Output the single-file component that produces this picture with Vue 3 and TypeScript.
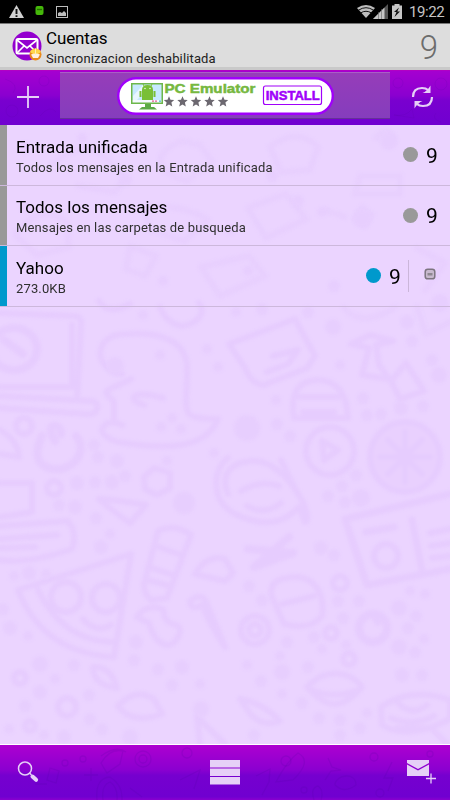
<script setup lang="ts">
interface Account {
  name: string
  detail: string
  unread: number
  tone: 'grey' | 'blue'
  folder: boolean
}

const accounts: Account[] = [
  { name: 'Entrada unificada', detail: 'Todos los mensajes en la Entrada unificada', unread: 9, tone: 'grey', folder: false },
  { name: 'Todos los mensajes', detail: 'Mensajes en las carpetas de busqueda', unread: 9, tone: 'grey', folder: false },
  { name: 'Yahoo', detail: '273.0KB', unread: 9, tone: 'blue', folder: true },
]

// x, y, radius of the small dots in the wallpaper
const dots: number[][] = [
  [143, 315, 5], [160, 355, 5], [207, 349, 5], [218, 367, 5], [94, 445, 6], [98, 457, 6], [117, 461, 7], [167, 461, 5],
  [214, 453, 5], [77, 483, 7], [95, 482, 6], [112, 482, 7], [125, 476, 6], [59, 505, 6], [75, 507, 7], [96, 518, 6],
  [161, 427, 5], [172, 418, 5], [181, 429, 5], [115, 366, 9], [184, 503, 11], [333, 327, 8], [340, 365, 5], [407, 322, 7],
  [412, 341, 6], [432, 360, 6], [439, 375, 8], [276, 400, 5], [363, 398, 6], [367, 415, 6], [381, 414, 6], [401, 408, 7],
  [423, 406, 6], [247, 428, 13], [277, 424, 6], [290, 436, 6], [356, 475, 6], [342, 486, 6], [328, 496, 6], [345, 502, 6],
  [361, 498, 9], [14, 576, 5], [29, 573, 7], [46, 574, 5], [101, 547, 7], [110, 534, 5], [3, 609, 6], [10, 628, 7],
  [28, 636, 5], [40, 664, 8], [74, 665, 6], [55, 679, 5], [40, 692, 7], [25, 706, 6], [89, 695, 6], [90, 719, 6],
  [102, 729, 6], [9, 729, 5], [44, 735, 5], [64, 737, 7], [130, 737, 8], [136, 642, 7], [134, 660, 6], [158, 669, 6],
  [182, 667, 7], [172, 685, 6], [200, 684, 5], [201, 709, 8], [321, 548, 7], [334, 555, 6], [249, 586, 6], [262, 600, 6],
  [338, 601, 6], [359, 601, 6], [343, 618, 6], [410, 591, 5], [425, 594, 5], [399, 608, 8], [416, 616, 6], [408, 628, 6],
  [399, 647, 8], [415, 652, 6], [424, 639, 5], [314, 637, 6], [322, 649, 5], [287, 642, 6], [280, 656, 5], [282, 672, 8],
  [308, 667, 6], [261, 681, 6], [247, 665, 5], [402, 675, 7], [422, 675, 6], [282, 694, 5], [302, 703, 6], [319, 718, 6],
  [340, 720, 6], [340, 735, 6], [360, 728, 6], [254, 735, 6], [367, 713, 5], [346, 645, 5], [25, 148, 6], [82, 138, 5],
  [272, 176, 6], [389, 141, 9], [322, 212, 5], [362, 219, 9], [298, 201, 6], [163, 281, 5], [248, 271, 5], [334, 286, 6],
  [26, 208, 5], [126, 180, 6], [230, 230, 5], [236, 312, 5], [262, 309, 6], [308, 312, 6], [440, 303, 9],
]
</script>

<template>
  <div class="screen">
    <div class="status">
      <svg class="status-left" width="80" height="23" viewBox="0 0 80 23">
        <path d="M16.500 5 24 18H9Z" fill="#d0d0d0" />
        <path d="M16.500 9v5M16.500 15.200v1.700" stroke="#111" stroke-width="1.900" />
        <rect x="35.500" y="6" width="8" height="9" rx="2" fill="#45b80a" />
        <path d="M37 9.500h5" stroke="#277000" stroke-width="1.400" />
        <rect x="56.500" y="6.500" width="11" height="11" fill="none" stroke="#bdbdbd" />
        <path d="M58 16v-3l2-1 2 1 2-2 2 2v3z" fill="#bdbdbd" />
      </svg>
      <svg class="status-right" width="50" height="23" viewBox="0 0 50 23">
        <path d="M0 8Q9 2 18 8L9 18Z" fill="#bdbdbd" />
        <path d="M1.500 10.200Q9 5.200 16.500 10.200M3.500 13Q9 9.500 14.500 13" fill="none" stroke="#111" stroke-width="1" />
        <path d="M31 4v15H16Z" fill="#555" />
        <path d="M27.500 7.500V19H16Z" fill="#c5c5c5" />
        <path d="M21.500 12v7M24.500 9v10" stroke="#666" stroke-width=".6" />
        <path d="M35 5.500h2.500V4h5v1.500H45V19H35Z" fill="#c5c5c5" />
        <path d="m42 7.500-5 4.500h2.500L37.500 17l5.500-5.500h-2.700Z" fill="#111" />
      </svg>
      <span class="clock">19:22</span>
    </div>

    <header class="header">
      <svg class="logo" width="32" height="32" viewBox="0 0 32 32">
        <circle cx="15" cy="15" r="14.500" fill="#9300cf" />
        <rect x="4.500" y="8" width="21" height="14.500" rx="1.500" fill="none" stroke="#fff" stroke-width="2" />
        <path d="m5 9 10 8 10-8M5 22l7-7M25 22l-7-7" fill="none" stroke="#fff" stroke-width="1.700" />
        <circle cx="23.500" cy="23.500" r="6" fill="#e98a1c" />
        <path d="M18 21a6 6 0 0 1 11 0l-3 2h-5Z" fill="#ffd54b" />
        <path d="M19 23.500q4.500-2 9 0l-2 3.500h-5Z" fill="#fff0e2" />
        <path d="M23.500 17.500v6" stroke="#fff0b0" />
      </svg>
      <div class="heading">
        <div class="heading-title">Cuentas</div>
        <div class="heading-sub">Sincronizacion deshabilitada</div>
      </div>
      <span class="total">9</span>
    </header>

    <div class="toolbar">
      <svg class="add" width="60" height="54" viewBox="0 0 60 54">
        <g fill="none" stroke="#5b00a8" stroke-opacity=".16">
          <circle cx="12" cy="40" r="6" /><circle cx="44" cy="10" r="5" /><path d="M5 8q15 5 8 14M40 45q10-12 16-4" />
        </g>
        <path d="M28 15v22M17 26h22" stroke="#e6d0f7" stroke-width="1.800" />
      </svg>
      <div class="banner">
        <svg width="217" height="38" viewBox="0 0 217 38">
          <rect x="1.200" y="1.200" width="214.600" height="35.600" rx="17.800" fill="#fff" stroke="#a000fa" stroke-width="2.400" />
          <path d="M14 6h32v21H14z" fill="#6db74b" />
          <path d="M15.500 7.500h29v15.500h-29z" fill="#c7e9ff" />
          <path d="m16 19 10-11h7L20 23h-4z" fill="#e8f7ff" />
          <path d="M15.500 23h29v2.500h-29z" fill="#f5f9ff" />
          <path d="M35 24.200h2m1 0h2" stroke="#e65b8e" stroke-width="1.200" /><path d="M42 24.200h2" stroke="#45bdd0" stroke-width="1.200" />
          <path d="M25 13q0-5 5.500-5T36 13v10H25zM22.500 14h2v6h-2zM36.500 14h2v6h-2z" fill="#79bf35" />
          <path d="m27 9-1-2m8 2 1-2M25 13.500h11" stroke="#79bf35" />
          <circle cx="28" cy="11.500" r=".7" fill="#fff" /><circle cx="33" cy="11.500" r=".7" fill="#fff" />
          <path d="M28 27h6v3h3l3 2.500H22l3-2.500h3z" fill="#5caa45" />
          <text class="ad-name" x="47.500" y="16" textLength="91" lengthAdjust="spacingAndGlyphs">PC Emulator</text>
          <path v-for="i in 5" :key="i" :transform="`translate(${38.5 + i * 13.5} 24.500)`" d="m0-5.200 1.500 3.500 3.700.3-2.800 2.500.9 3.800L0 2.900l-3.300 2 .9-3.800-2.800-2.500 3.700-.3Z" fill="#6c6870" />
          <path d="M107.300 18h5v5l-5-1.500z" fill="#fff" opacity=".35" />
          <rect x="146.500" y="9" width="58" height="18.500" rx="2" fill="#fff" stroke="#a000fa" stroke-width="1.200" />
          <text class="ad-install" x="148.700" y="22.800" textLength="54" lengthAdjust="spacingAndGlyphs">INSTALL</text>
        </svg>
      </div>
      <svg class="sync" width="60" height="54" viewBox="0 0 60 54">
        <g fill="none" stroke="#5b00a8" stroke-opacity=".16">
          <path d="M4 44q12 2 18-6l2 9zM46 42q-5 6 5 9" /><circle cx="8" cy="12" r="5" /><circle cx="51" cy="13" r="6" />
        </g>
        <path d="M23 26q0-9 9-9 4 0 6 2M42 26q0 9-9 9-4 0-6-2" fill="none" stroke="#e6d0f7" stroke-width="2.200" />
        <path d="M40.500 14.500v7.500h-8q4.500-1.500 8-7.500ZM24.500 37.500v-7.500h8q-4.500 1.500-8 7.500Z" fill="#e6d0f7" />
      </svg>
    </div>

    <main class="content">
      <svg class="wallpaper" width="450" height="619" viewBox="0 125 450 619">
        <g fill="none" stroke="#e6ccfe" stroke-width="6" stroke-linecap="round" stroke-linejoin="round">
          <path d="M0 313l75 3q7 1 6 9l-4 75M0 396l92 5q7 2 5 8-2 6-10 5L0 408M72 325v62L0 387" />
          <ellipse cx="14" cy="349" rx="23" ry="21" stroke-width="8" /><path d="m4 340 19 14" stroke-width="8" />
          <path d="M122 374c-29-4-30-40 4-40 43-3 61 12 61 34 0 48-9 50 31 51-12 30-51 31-100 23-30-9-11-26 4-17M131 379c-31 15-28 10-17 23v20M163 398c-31-9-38 1-19 7" />
          <path d="M42 436c-15 32 12 36 23 32 19-8 18-25 11-32M55 441c-13-19 7-19 6-7" stroke-width="8" />
          <circle cx="24" cy="426" r="8" /><circle cx="54" cy="488" r="7" />
          <path d="M0 430q18 10 19 27L0 454M0 483h32v29q-16 3-32 5" />
          <path d="m144 477 10-9 16 5v15l-13 7-12-6ZM99 499q19 1 47 6l-16 18q-25-18-31-24" />
          <path d="M160 307c4 12 15 19 23 19 16-3 23-14 16-23M99 301q9 15 31 3" />
          <path d="m229 344 66-25 20 37-8 12-43 17q-13-1-19-17ZM273 356l25-6-10 14-21 8" />
          <path d="M294 418q-6-38 25-38 27 1 29 38zM300 397h38M303 412h31" />
          <circle cx="330" cy="451" r="24" /><path d="M322 441l16 9-14 10z" />
          <circle cx="405" cy="457" r="35" fill="#e9d0fe" /><path d="M405 432v50M380 457h50M388 440l34 34M422 440l-34 34" />
          <path d="m351 344 19-9 23 6-17 4 3 20 12 16 15-18 18 28-24 8-10-20-28-4 7-27Z" />
          <path d="M228 494c-12-29 18-36 34-32 31 9 53 59 43 60l-6-15q-25 27-66 6c-23-14-20-45-5-55" />
          <path d="M241 491q20-12 38-5M247 506q18 10 34-3M281 460l15 31" />
          <path d="m345 519 105-25M345 519l22 66 83-16M412 520l10 50M366 532l28-5" stroke-width="7" />
          <circle cx="386" cy="556" r="12" /><path d="M430 533l20-4M431 546l19-3M432 558l18-2" />
          <path d="m0 526 68-5q10 13 4 28Q28 564 0 560M0 539l57-4M0 548l35-1" />
          <path d="m18 590 113-36-17 103q-71-4-96-67Zm20 0q26 52 76 52" /><circle cx="66" cy="597" r="15" /><circle cx="106" cy="598" r="14" />
          <path d="M83 619q13 15 28 6" />
          <path d="m158 531q17-8 33 4l-24 63-16 2q-7-5-7-16Zm-2 15 25 9M149 567l24 8M147 580l20 5" />
          <path d="M137 617q9-14 26-8c3 23 17 9 17 23-7 22-25 14-31-9Z" />
          <path d="M195 574q12-20 30-15l8 14-8 8ZM190 601q12-10 17 3l18 43q-16-24-23-42-12 6-12-4Z" />
          <path d="M93 667q18-1 24 21-24-3-24-21ZM118 706q17-19 36-7l8 15q-30 11-44-8" />
          <circle cx="67" cy="707" r="9" /><circle cx="20" cy="678" r="6" /><circle cx="30" cy="726" r="5" />
          <path d="m248 549 45 4-39 14 35-30" stroke-width="8" />
          <path d="M272 597c-5-17 12-20 26-20 24 3 26 28 24 39q-12 15-38 8ZM282 604l32-8" />
          <circle cx="255" cy="630" r="14" /><circle cx="255" cy="630" r="6" />
          <circle cx="373" cy="628" r="14" stroke-width="8" /><path d="m374 617 4 6" />
          <circle cx="340" cy="583" r="7" /><circle cx="331" cy="633" r="6" /><circle cx="349" cy="659" r="6" />
          <path d="M307 687c18-19 42-17 55 0-21 24-36 21-55 0Zm5 3q22 9 43 1" />
          <path d="M240 699q23 4 40 22-15 6-28-5Z" /><path d="M381 707q30-21 69-7v19q-42 22-68 6ZM398 703q14 14 29 2M391 718q22 9 43-2" />
          <path d="M397 728h34l17 17M200 744l-3-27 28 27" />
          <path d="M53 164q28-25 50-9l22 22-10 15-37-6M182 141c-38 15-19 34 5 40l25-20-12-16Z" opacity=".55" />
          <path d="M360 176h40v18h-45ZM376 138q10-12 16-2M326 210l18 7M15 235q23-33 51-14l3 26-32 8ZM144 209q36-7 64 11l-24 21-35-12Z" opacity=".55" />
          <path d="M270 147q27-21 48 0l-8 23-29 2ZM248 208l38-14 20 25-40 19ZM362 207l10 8-7 11-10-8Z" opacity=".55" />
          <path d="m130 246 26 10-11 20-19-7ZM201 267l48-11 16 20-45 20ZM344 308q18 21 51-1M417 307l9 27 24-12M417 248l28 15-20 27" opacity=".55" />
        </g>
        <g fill="#e7cefe"><circle v-for="(d, i) in dots" :key="i" :cx="d[0]" :cy="d[1]" :r="d[2]" /></g>
      </svg>

      <div v-for="account in accounts" :key="account.name" class="row">
        <span class="chip" :class="account.tone"></span>
        <div class="info">
          <div class="name">{{ account.name }}</div>
          <div class="detail">{{ account.detail }}</div>
        </div>
        <span class="dot" :class="account.tone"></span>
        <span class="unread">{{ account.unread }}</span>
        <div v-if="account.folder" class="folder">
          <svg width="12" height="12" viewBox="0 0 12 12">
            <rect x="1.200" y="1.200" width="9.600" height="9.600" rx="2.600" fill="#c8b9ce" stroke="#7d7580" stroke-width="1.500" />
            <path d="M3.500 5h5v2.500h-5z" fill="#8e8791" />
          </svg>
        </div>
      </div>
    </main>

    <footer class="footer">
      <svg width="450" height="55" viewBox="0 0 450 55">
        <g fill="none" stroke="#5300a0" stroke-opacity=".16" stroke-width="1.300">
          <circle cx="143" cy="14" r="8" /><circle cx="143" cy="14" r="4" /><circle cx="65" cy="18" r="3" /><circle cx="83" cy="14" r="3" />
          <path d="M101 18q9-15 22-12l-3 13-13 9ZM126 7q-10-7-25 4M91 23v13M84 30h14M50 23l9 3-3 12-9-3ZM97 55q-2-22 13-23 13 8 12 23M103 55q-2-15 7-18 8 5 7 18M35 39h12M130 43l12 9M180 35l20-10-6 19" />
          <circle cx="187" cy="8" r="5" /><circle cx="374" cy="12" r="4" /><circle cx="286" cy="16" r="5" /><path d="m276 37q11-21 22-29 15 8-5 27ZM328 13l4 9 9 3-10 1-6 9M335 40c0-10 21-14 21 0q-12 9-21 0M314 55q-4-12 4-14 6 4 3 14M392 17l-8 16h9l-5 13M256 31l14-7-1 13-7 13" />
          <circle cx="380" cy="48" r="4" /><circle cx="304" cy="45" r="3" /><circle cx="430" cy="9" r="3" />
        </g>
        <circle cx="25" cy="23.500" r="6.500" fill="none" stroke="#e6d0f7" stroke-width="1.500" />
        <path d="m29.500 28 2 2" stroke="#e6d0f7" stroke-width="1.500" />
        <path d="m32.500 31.500 3.600 3.300" stroke="#e6d0f7" stroke-width="4" stroke-linecap="round" />
        <path d="M210 15h30v7.500h-30zM210 23.500h30v7.500h-30zM210 32h30v7.500h-30z" fill="#e6d0f7" />
        <path d="M407 15h22v3l-11 6-11-6z" fill="#e6d0f7" />
        <path d="m407 19.500 11 6 11-6V31h-22z" fill="#e6d0f7" />
        <path d="M431 28.500v10M426 33.500h10" stroke="#e6d0f7" stroke-width="1.300" />
      </svg>
    </footer>
  </div>
</template>

<style>
body {
  margin: 0;
}
</style>

<style scoped>
.screen {
  width: 450px;
  height: 800px;
  display: flex;
  flex-direction: column;
  overflow: hidden;
  font-family: Roboto, sans-serif;
  color: #000;
  background: #ebd4ff;
}
.status {
  height: 23px;
  flex: none;
  display: flex;
  background: #000;
}
.status-right {
  margin-left: 277px;
}
.clock {
  margin-left: 2px;
  font-size: 15px;
  line-height: 25px;
  letter-spacing: -0.4px;
  color: #c5c5c5;
}
.header {
  height: 47px;
  flex: none;
  box-sizing: border-box;
  display: flex;
  border-top: 1px solid #777;
  background: linear-gradient(#ddd 0 43px, #c9c9c9 43px 46px);
}
.logo {
  margin: 7px 2px 0 12px;
  flex: none;
}
.heading {
  flex: 1;
}
.heading-title {
  margin-top: 3px;
  font-size: 17px;
  line-height: 22px;
  letter-spacing: -0.15px;
}
.heading-sub {
  font-size: 13px;
  line-height: 19px;
  color: #222;
  letter-spacing: 0.14px;
}
.total {
  margin-right: 12px;
  font-size: 33px;
  line-height: 48px;
  font-weight: 300;
  color: #6c6c6c;
}
.toolbar {
  height: 55px;
  flex: none;
  box-sizing: border-box;
  display: flex;
  border-top: 1px solid #b200c4;
  background: linear-gradient(#a500d0, #8b00d0 45%, #7900cf 55%, #7000d0);
}
.banner {
  width: 330px;
  height: 47px;
  box-sizing: border-box;
  margin-top: 1px;
  padding: 4px 0 0 57px;
  border-top: 1px solid #a95fc4;
  border-bottom: 1px solid #663198;
  background: linear-gradient(#963db9, #853dbd);
}
.banner svg {
  display: block;
}
.ad-name {
  font: 900 13.5px "Liberation Sans", sans-serif;
  fill: #76b83f;
  stroke: #76b83f;
  stroke-width: 0.5px;
}
.ad-install {
  font: 900 12.5px "Liberation Sans", sans-serif;
  fill: #a000fa;
  stroke: #a000fa;
  stroke-width: 0.5px;
}
.content {
  position: relative;
  flex: 1;
}
.wallpaper {
  position: absolute;
  inset: 0;
}
.wallpaper g {
  filter: blur(1.6px);
}
.row {
  position: relative;
  height: 60.6px;
  box-sizing: border-box;
  display: flex;
  align-items: center;
  padding-right: 12px;
  border-bottom: 1px solid #cdb8dc;
}
.chip {
  width: 7px;
  align-self: stretch;
}
.grey {
  background: #999;
}
.blue {
  background: #09c;
}
.info {
  flex: 1;
  padding: 3px 0 0 9px;
}
.name {
  font-size: 17px;
  line-height: 22px;
}
.detail {
  font-size: 13px;
  line-height: 19px;
  letter-spacing: 0.14px;
  color: #303030;
}
.dot {
  width: 15px;
  height: 15px;
  border-radius: 50%;
}
.unread {
  width: 12px;
  margin-left: 8px;
  padding-top: 2px;
  font-size: 21px;
  line-height: 26px;
}
.folder {
  width: 30px;
  height: 32px;
  margin-left: 7px;
  box-sizing: border-box;
  display: flex;
  align-items: center;
  border-left: 1px solid #cbb6da;
}
.folder svg {
  margin: 0 0 3px 15px;
}
.footer {
  height: 56px;
  flex: none;
  box-sizing: border-box;
  border-top: 1px solid #fff;
  background: linear-gradient(#ad00d0, #8b00d0 45%, #7600cf 55%, #7000d0 94%, #8a00cf);
}
.footer svg {
  display: block;
}
</style>
